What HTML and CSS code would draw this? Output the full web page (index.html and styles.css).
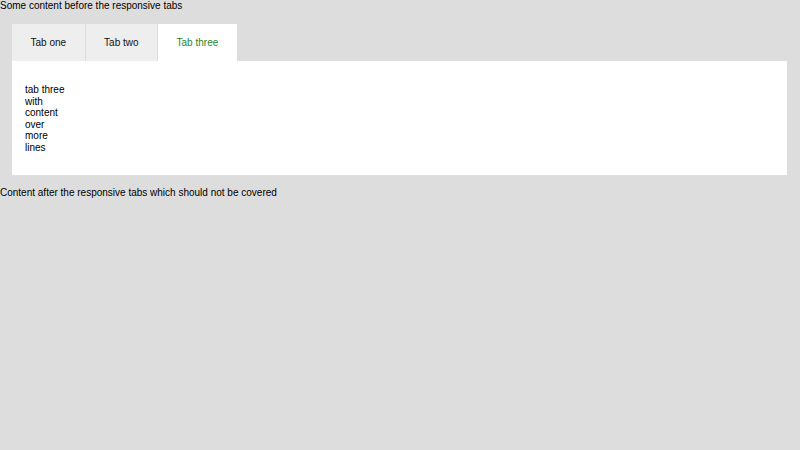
FILE: index.html
```html
<!DOCTYPE html>
<html>
<head>
<meta charset="utf-8">
<title>Responsive tabs</title>
<link rel="stylesheet" href="styles.css">
</head>
<body>
<div class="line">Some content before the responsive tabs</div>
<div class="tabs">
  <div class="tab-list">
    <div class="tab">Tab one</div>
    <div class="tab">Tab two</div>
    <div class="tab active">Tab three</div>
  </div>
  <div class="panel">
    <p class="panel-text">tab three<br>with<br>content<br>over<br>more<br>lines</p>
  </div>
</div>
<div class="line">Content after the responsive tabs which should not be covered</div>
</body>
</html>
```
FILE: styles.css
```css
html, body {
  margin: 0;
  padding: 0;
  background: #dddddd;
}
body {
  font-family: "Liberation Sans", Arial, sans-serif;
  font-size: 10px;
  line-height: 11.5px;
  color: #000;
}
.line {
  height: 11.5px;
}
.tabs {
  margin: 12.5px 13px 11.5px 12px;
}
.tab-list {
  display: flex;
  gap: 1px;
}
.tab {
  height: 37px;
  display: flex;
  align-items: center;
  justify-content: center;
  padding: 0 18.5px;
  background: #eeeeee;
  color: #111;
}
.tab.active {
  background: #ffffff;
  color: #2a842a;
}
.panel {
  background: #ffffff;
  padding: 23px 13px 22px;
}
.panel-text {
  margin: 0;
}
```
